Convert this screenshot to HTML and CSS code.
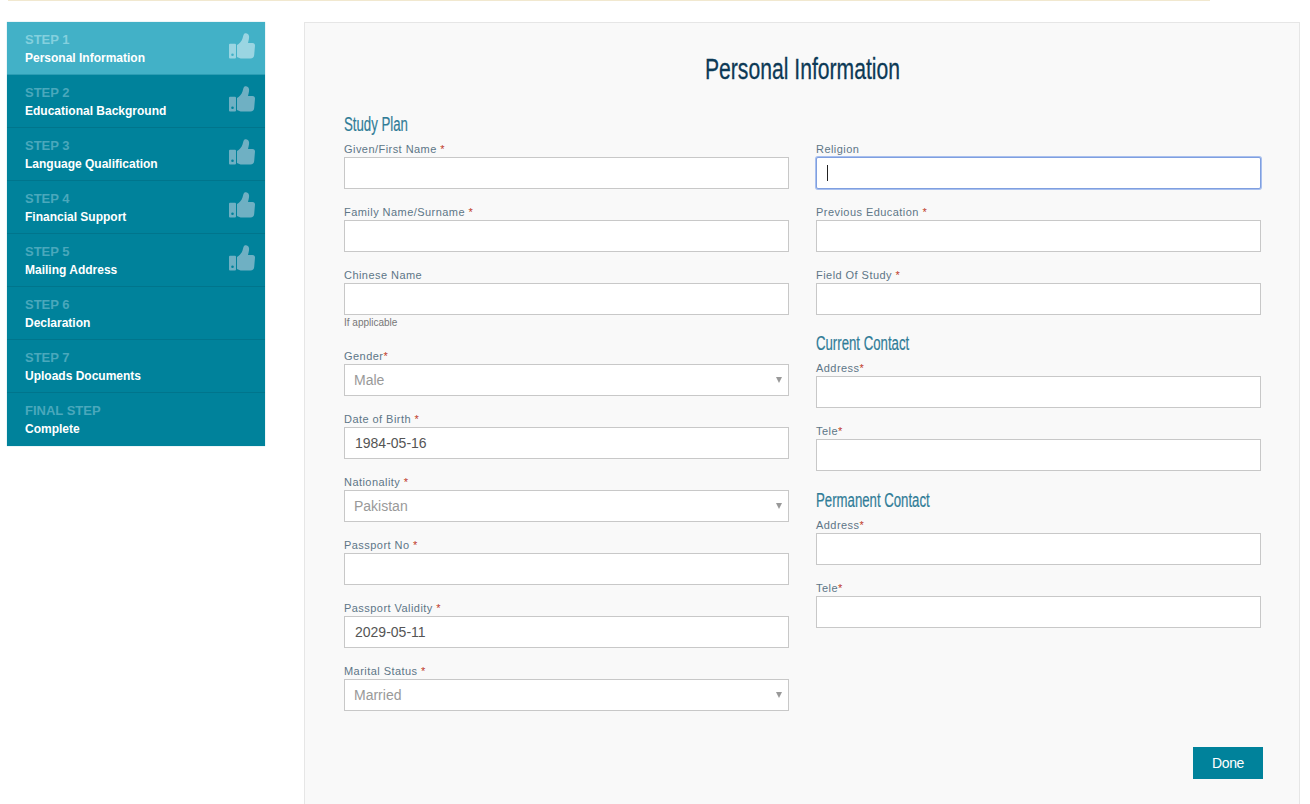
FILE: index.html
```html
<!DOCTYPE html>
<html>

<head>
    <title>Personal Information</title>
    <link rel="stylesheet" href="styles.css">
</head>

<body>
    <svg class="icon-defs" width="0" height="0">
        <symbol id="thumb" viewBox="0 0 26 26">
            <path fill-rule="evenodd" d="M1 10.800h5a1 1 0 0 1 1 1V24.500a1 1 0 0 1-1 1H1a1 1 0 0 1-1-1V11.800a1 1 0 0 1 1-1zM3.500 20.500a1.300 1.300 0 1 0 0 2.600 1.300 1.300 0 0 0 0-2.600z" />
            <path d="M8 12c2-1 4.500-3.500 5.500-6.500.8-2.500 1-4 2-4.900 1.500-1 4-.3 4.500 2.400.4 2-.5 5-1 7h4.500c1.700 0 2.500 1.200 2.500 2.500l-.8 9.500c-.2 2-1.400 3.500-3.700 3.500H13c-2 0-3.500-.7-5-1.500z" />
        </symbol>
    </svg>

    <div class="top-line"></div>

    <div class="page">
        <!-- steps -->
        <ul class="steps">
            <li class="step active">
                <span class="step-num">STEP 1</span>
                <span class="step-title">Personal Information</span>
                <svg class="thumb"><use href="#thumb" /></svg>
            </li>
            <li class="step">
                <span class="step-num">STEP 2</span>
                <span class="step-title">Educational Background</span>
                <svg class="thumb"><use href="#thumb" /></svg>
            </li>
            <li class="step">
                <span class="step-num">STEP 3</span>
                <span class="step-title">Language Qualification</span>
                <svg class="thumb"><use href="#thumb" /></svg>
            </li>
            <li class="step">
                <span class="step-num">STEP 4</span>
                <span class="step-title">Financial Support</span>
                <svg class="thumb"><use href="#thumb" /></svg>
            </li>
            <li class="step">
                <span class="step-num">STEP 5</span>
                <span class="step-title">Mailing Address</span>
                <svg class="thumb"><use href="#thumb" /></svg>
            </li>
            <li class="step">
                <span class="step-num">STEP 6</span>
                <span class="step-title">Declaration</span>
            </li>
            <li class="step">
                <span class="step-num">STEP 7</span>
                <span class="step-title">Uploads Documents</span>
            </li>
            <li class="step">
                <span class="step-num">FINAL STEP</span>
                <span class="step-title">Complete</span>
            </li>
        </ul>

        <!-- form -->
        <div class="panel">
            <h1>Personal Information</h1>

            <div class="columns">
                <div class="column">
                    <h2>Study Plan</h2>

                    <div class="field">
                        <label>Given/First Name <span class="req">*</span></label>
                        <input type="text">
                    </div>
                    <div class="field">
                        <label>Family Name/Surname <span class="req">*</span></label>
                        <input type="text">
                    </div>
                    <div class="field has-hint">
                        <label>Chinese Name</label>
                        <input type="text">
                        <div class="hint">If applicable</div>
                    </div>
                    <div class="field">
                        <label>Gender<span class="req">*</span></label>
                        <div class="select-box"><select><option>Male</option></select></div>
                    </div>
                    <div class="field">
                        <label>Date of Birth <span class="req">*</span></label>
                        <input type="text" value="1984-05-16">
                    </div>
                    <div class="field">
                        <label>Nationality <span class="req">*</span></label>
                        <div class="select-box"><select><option>Pakistan</option></select></div>
                    </div>
                    <div class="field">
                        <label>Passport No <span class="req">*</span></label>
                        <input type="text">
                    </div>
                    <div class="field">
                        <label>Passport Validity <span class="req">*</span></label>
                        <input type="text" value="2029-05-11">
                    </div>
                    <div class="field">
                        <label>Marital Status <span class="req">*</span></label>
                        <div class="select-box"><select><option>Married</option></select></div>
                    </div>
                </div>

                <div class="column">
                    <div class="heading-gap"></div>

                    <div class="field">
                        <label>Religion</label>
                        <div class="focus-box">
                            <input type="text" class="focused">
                            <span class="caret"></span>
                        </div>
                    </div>
                    <div class="field">
                        <label>Previous Education <span class="req">*</span></label>
                        <input type="text">
                    </div>
                    <div class="field">
                        <label>Field Of Study <span class="req">*</span></label>
                        <input type="text">
                    </div>

                    <h2 class="contact-first">Current Contact</h2>
                    <div class="field">
                        <label>Address<span class="req">*</span></label>
                        <input type="text">
                    </div>
                    <div class="field">
                        <label>Tele<span class="req">*</span></label>
                        <input type="text">
                    </div>

                    <h2 class="contact-second">Permanent Contact</h2>
                    <div class="field">
                        <label>Address<span class="req">*</span></label>
                        <input type="text">
                    </div>
                    <div class="field">
                        <label>Tele<span class="req">*</span></label>
                        <input type="text">
                    </div>
                </div>
            </div>

            <div class="actions">
                <button>Done</button>
            </div>
        </div>
    </div>
</body>

</html>
```

FILE: styles.css
```css
html,
body {
    height: 804px;
    overflow: hidden;
}

body {
    margin: 0;
    background-color: #fff;
    font-family: "Liberation Sans", Arial, sans-serif;
}

.icon-defs {
    display: block;
    height: 0;
}

.top-line {
    width: 1202px;
    height: 1px;
    margin-left: 8px;
    background-color: #f1e8cf;
}

.page {
    display: flex;
    align-items: flex-start;
    gap: 39px;
    padding: 21px 10px 0 7px;
}

/* steps */
.steps {
    flex: 0 0 258px;
    margin: 0;
    padding: 0;
    list-style: none;
    background-color: #00829b;
    box-shadow: 0 0 1px #8fc6d2;
}

.step {
    position: relative;
    height: 53px;
    padding: 10px 18px 0;
    box-sizing: border-box;
    border-bottom: 1px solid #00758c;
}

.step:last-child {
    border-bottom: none;
}

.step.active {
    background-color: #42b1c7;
    border-bottom-color: #2b9db4;
}

.step-num {
    display: block;
    font-size: 13px;
    line-height: 16px;
    font-weight: bold;
    color: #4aa8bc;
}

.step.active .step-num {
    color: #84d0de;
}

.step-title {
    display: block;
    margin-top: 2px;
    font-size: 12px;
    line-height: 16px;
    font-weight: bold;
    color: #fff;
}

.thumb {
    position: absolute;
    top: 11px;
    right: 10px;
    width: 26px;
    height: 26px;
    fill: #6fb0c3;
}

.step.active .thumb {
    fill: #9ad5e2;
}

/* form panel */
.panel {
    flex: 1;
    height: 790px;
    box-sizing: border-box;
    padding: 0 38px 0 39px;
    background-color: #f9f9f9;
    border: 1px solid #e6e6e6;
}

h1 {
    margin: 28px 0 0;
    font-family: "Liberation Sans", sans-serif;
    font-size: 30px;
    line-height: 36px;
    font-weight: normal;
    text-align: center;
    color: #0d3a56;
    transform: scaleX(.705);
    -webkit-text-stroke: .3px #0d3a56;
}

.columns {
    display: flex;
    gap: 27px;
    margin-top: 28px;
}

.column {
    flex: 0 0 445px;
}

h2 {
    margin: 0 0 9px;
    font-family: "Liberation Sans", sans-serif;
    font-size: 20px;
    line-height: 18px;
    font-weight: normal;
    color: #2f7c97;
    transform: scaleX(.66);
    transform-origin: left center;
    -webkit-text-stroke: .2px #2f7c97;
}

h2.contact-first {
    margin-top: 3px;
}

h2.contact-second {
    margin-top: 4px;
}

.heading-gap {
    height: 27px;
}

.field {
    height: 63px;
}

.field.has-hint {
    height: 81px;
}

label {
    display: block;
    height: 14px;
    margin-bottom: 1px;
    font-size: 11px;
    line-height: 14px;
    letter-spacing: .45px;
    color: #5d7687;
}

.req {
    color: #c0392b;
}

input,
select {
    display: block;
    width: 100%;
    height: 32px;
    box-sizing: border-box;
    padding: 0 10px;
    background-color: #fff;
    border: 1px solid #c8c8c8;
    border-radius: 0;
    outline: none;
    font-family: "Liberation Sans", Arial, sans-serif;
    font-size: 14px;
    color: #555;
}

select {
    padding-left: 9px;
    appearance: none;
    color: #999;
}

.select-box {
    position: relative;
}

.select-box::after {
    content: "";
    position: absolute;
    top: 13px;
    right: 7px;
    border-left: 3px solid transparent;
    border-right: 3px solid transparent;
    border-top: 6px solid #999;
}

.hint {
    margin-top: 2px;
    font-size: 10px;
    line-height: 12px;
    color: #777;
}

.focus-box {
    position: relative;
}

input.focused {
    border-color: #7f9fe0;
    border-width: 1px;
    border-radius: 2px;
    box-shadow: 0 0 0 1px #a9c0ee;
}

.caret {
    position: absolute;
    top: 8px;
    left: 11px;
    width: 1px;
    height: 16px;
    background-color: #222;
}

.actions {
    position: absolute;
    top: 747px;
    left: 1193px;
}

button {
    width: 70px;
    height: 32px;
    padding: 0;
    background-color: #00829b;
    color: #fff;
    border: none;
    font-family: "Liberation Sans", Arial, sans-serif;
    font-size: 14px;
    letter-spacing: -.4px;
}
```
